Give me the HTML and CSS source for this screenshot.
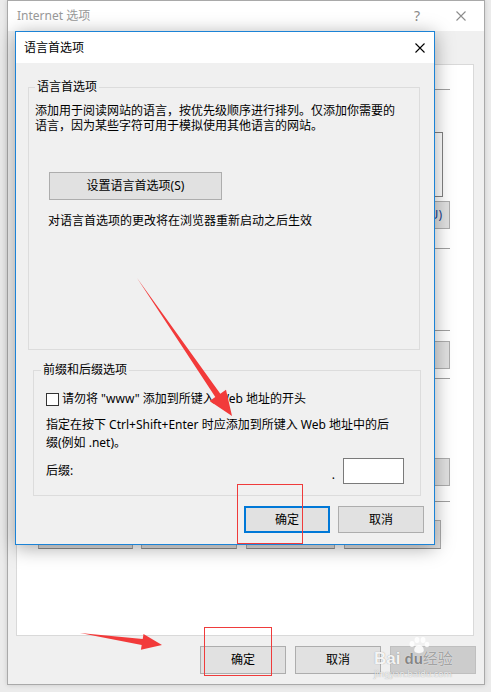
FILE: index.html
```html
<!DOCTYPE html>
<html>
    <head>
        <meta charset="utf-8">
        <title>语言首选项</title>
        <link rel="stylesheet" href="styles.css">
    </head>
    <body>
        <div class="screen">
            <div class="window">
                <div class="window-title">
                    <span class="caption">Internet 选项</span>
                    <span class="help">?</span>
                    <svg class="close gray" width="10" height="10" viewBox="0 0 10 10"><path d="M0.5 0.5 L9.5 9.5 M9.5 0.5 L0.5 9.5" /></svg>
                </div>
                <div class="window-body">
                    <div class="panel">
                        <div class="rule r1"></div>
                        <div class="listbox"></div>
                        <div class="btn panel-btn b1">删除(U)</div>
                        <div class="rule r2"></div>
                        <div class="rule r3"></div>
                        <div class="btn panel-btn b2"></div>
                        <div class="rule r4"></div>
                        <div class="btn panel-btn b3"></div>
                        <div class="rule r5"></div>
                        <div class="panel-row">
                            <div class="btn w98"></div>
                            <div class="btn w98"></div>
                            <div class="btn w91"></div>
                            <div class="btn w100"></div>
                        </div>
                    </div>
                    <div class="window-buttons">
                        <div class="btn wide">确定</div>
                        <div class="btn wide">取消</div>
                        <div class="btn wide disabled"></div>
                    </div>
                </div>
            </div>

            <div class="dialog">
                <div class="dialog-title">
                    <span class="caption">语言首选项</span>
                    <svg class="close" width="10" height="10" viewBox="0 0 10 10"><path d="M0.5 0.5 L9.5 9.5 M9.5 0.5 L0.5 9.5" /></svg>
                </div>
                <div class="dialog-body">
                    <div class="group g1">
                        <span class="group-title">语言首选项</span>
                        <div class="intro">
                            <span class="line">添加用于阅读网站的语言，按优先级顺序进行排列。仅添加你需要的</span>
                            <span class="line">语言，因为某些字符可用于模拟使用其他语言的网站。</span>
                        </div>
                        <div class="btn set-lang">设置语言首选项(S)</div>
                        <p class="note">对语言首选项的更改将在浏览器重新启动之后生效</p>
                    </div>
                    <div class="group g2">
                        <span class="group-title">前缀和后缀选项</span>
                        <div class="check-row">
                            <span class="checkbox"></span>
                            <span>请勿将 "www" 添加到所键入 Web 地址的开头</span>
                        </div>
                        <p class="hint">指定在按下 Ctrl+Shift+Enter 时应添加到所键入 Web 地址中的后<br>缀(例如 .net)。</p>
                        <div class="suffix-row">
                            <span>后缀:</span>
                            <span class="dot">.</span>
                            <span class="textbox"></span>
                        </div>
                    </div>
                    <div class="dialog-buttons">
                        <div class="btn wide default">确定</div>
                        <div class="btn wide">取消</div>
                    </div>
                </div>
            </div>

            <svg class="marks" width="491" height="692" viewBox="0 0 491 692">
                <polygon points="137,278 220.3,393.7 226,389.7 232,416 209.6,401.1 215.3,397.1" />
                <polygon points="80,633 142.7,638.9 143.5,634 162,645 140.9,649.8 141.7,644.9" />
                <rect x="237.5" y="484.5" width="65" height="59" />
                <rect x="204.5" y="627.5" width="67" height="48" />
            </svg>

            <div class="watermark">
                <svg class="paw" width="22" height="17" viewBox="0 0 22 17">
                    <ellipse cx="4" cy="7" rx="2.5" ry="3" />
                    <ellipse cx="9" cy="3" rx="2.5" ry="3" />
                    <ellipse cx="15" cy="3" rx="2.5" ry="3" />
                    <ellipse cx="19" cy="7.5" rx="2.3" ry="2.8" />
                    <path d="M11 8 C7 8 5 13 7 15 C9 16.5 13 16.5 15 15 C17 13 15 8 11 8 Z" />
                </svg>
                <div class="wm-logo"><span class="bai">Bai</span><span class="du">du</span><span class="jy">经验</span></div>
                <div class="wm-url">jingyan.baidu.com</div>
            </div>
        </div>
    </body>
</html>
```

FILE: styles.css
```css
body {
    margin: 0;
    background: #ebebeb;
    font-family: "Noto Sans", "Noto Sans CJK SC", sans-serif;
    font-size: 12px;
    line-height: 14px;
    color: #000;
}
p {
    margin: 0;
}
.screen {
    position: relative;
    width: 491px;
    height: 692px;
    overflow: hidden;
}

/* outer window */
.window {
    margin-left: 7px;
    width: 478px;
    height: 685px;
    box-sizing: border-box;
    border: 1px solid #a9a9a9;
    background: #f0f0f0;
    box-shadow: 0 0 5px rgba(0, 0, 0, 0.15);
}
.window-title {
    height: 30px;
    background: #fff;
    display: flex;
    align-items: center;
    color: #999;
}
.window-title .caption {
    padding-left: 9px;
}
.help {
    margin-left: auto;
    font-size: 14px;
    color: #8a8a8a;
}
.close {
    stroke: #000;
    stroke-width: 1.1;
    fill: none;
}
.close.gray {
    stroke: #8c8c8c;
    margin-left: 36px;
    margin-right: 18px;
}
.window-body {
    padding: 33px 8px 0 8px;
}
.panel {
    width: 458px;
    height: 572px;
    box-sizing: border-box;
    border: 1px solid #d9d9d9;
    background: #fff;
    display: flex;
    flex-direction: column;
    padding-right: 23px;
}
.rule {
    height: 1px;
    background: #a0a0a0;
    margin-left: 20px;
}
.r1 { margin-top: 24px; }
.r2 { margin-top: 19px; }
.r3 { margin-top: 81px; }
.r4 { margin-top: 9px; }
.r5 { margin-top: 15px; }
.listbox {
    margin-top: 42px;
    align-self: flex-end;
    margin-right: 7px;
    width: 200px;
    height: 65px;
    box-sizing: border-box;
    border: 1px solid #828282;
}
.btn {
    box-sizing: border-box;
    height: 28px;
    background: #e1e1e1;
    border: 1px solid #adadad;
    display: flex;
    align-items: center;
    justify-content: center;
}
.panel-btn {
    align-self: flex-end;
    width: 120px;
    justify-content: flex-end;
    padding-right: 7px;
    color: #1a3d8f;
}
.b1 { margin-top: 4px; }
.b2 { margin-top: 10px; }
.b3 { margin-top: 79px; }
.panel-row {
    margin-top: 18px;
    padding-left: 21px;
    display: flex;
}
.panel-row .btn {
    height: 29px;
    border-bottom-color: #8f8f8f;
    margin-right: 9px;
}
.w98 { width: 98px; }
.w91 { width: 91px; }
.w100 { width: 100px; }
.panel-row .w98:first-child { margin-right: 8px; }
.window-buttons {
    margin-top: 10px;
    display: flex;
    justify-content: flex-end;
    gap: 9px;
}
.wide {
    width: 86px;
}
.disabled {
    background: #cccccc;
    border-color: #bfbfbf;
}

/* dialog on top */
.dialog {
    position: absolute;
    left: 15px;
    top: 31px;
    width: 420px;
    height: 514px;
    box-sizing: border-box;
    border: 1px solid #1c83d6;
    background: #f0f0f0;
    box-shadow: 0 3px 18px rgba(0, 0, 0, 0.35);
}
.dialog-title {
    height: 31px;
    background: #fff;
    display: flex;
    align-items: center;
    padding-left: 8px;
}
.dialog-title .close {
    margin-left: auto;
    margin-right: 9px;
}
.dialog-body {
    padding: 24px 14px 0 12px;
}
.group {
    box-sizing: border-box;
    border: 1px solid #dcdcdc;
}
.group-title {
    display: block;
    width: max-content;
    height: 14px;
    margin: -8px 0 0 6px;
    padding: 0 2px;
    background: #f0f0f0;
}
.g1 {
    height: 263px;
    padding-left: 6px;
}
.g1 .group-title {
    margin-left: 0;
}
.intro {
    margin-top: 10px;
    font-family: "DejaVu Sans", "Noto Sans CJK SC", sans-serif;
}
.line {
    display: block;
    height: 14.5px;
    line-height: 14.5px;
}
.set-lang {
    margin: 39px 0 0 14px;
    width: 173px;
}
.note {
    margin: 14px 0 0 13px;
}
.g2 {
    margin: 20px 0 0 5px;
    width: 388px;
    height: 126px;
    padding: 0 16px 0 12px;
}
.g2 .group-title {
    margin-left: -5px;
}
.check-row {
    margin-top: 15px;
    display: flex;
    align-items: center;
}
.checkbox {
    width: 13px;
    height: 13px;
    box-sizing: border-box;
    border: 1px solid #333;
    background: #fff;
    margin-right: 3px;
}
.hint {
    margin-top: 10px;
    line-height: 18px;
}
.suffix-row {
    margin-top: 6px;
    display: flex;
    align-items: center;
}
.dot {
    margin-left: auto;
    margin-right: 8px;
    padding-top: 8px;
}
.textbox {
    width: 61px;
    height: 26px;
    box-sizing: border-box;
    border: 1px solid #7a7a7a;
    background: #fff;
}
.dialog-buttons {
    margin-top: 10px;
    margin-right: -4px;
    display: flex;
    justify-content: flex-end;
    gap: 8px;
}
.dialog-buttons .btn {
    height: 27px;
}
.default {
    border: 2px solid #0078d7;
}

/* annotations */
.marks {
    position: absolute;
    left: 0;
    top: 0;
    pointer-events: none;
}
.marks polygon {
    fill: #f23a3a;
}
.marks rect {
    fill: none;
    stroke: #ef3b3b;
    stroke-width: 1;
}
.watermark {
    position: absolute;
    left: 374px;
    top: 637px;
    width: 92px;
    color: rgba(255, 255, 255, 0.92);
    text-shadow: 0 0 1px rgba(90, 90, 90, 0.6);
}
.paw {
    display: block;
    margin-left: 34px;
    fill: rgba(255, 255, 255, 0.85);
}
.wm-logo {
    margin-top: -3px;
    font-family: "Liberation Sans", "Noto Sans CJK SC", sans-serif;
    font-size: 17px;
    line-height: 16px;
    font-weight: bold;
    white-space: nowrap;
}
.wm-logo .du {
    font-size: 15px;
    color: rgba(80, 80, 80, 0.7);
    text-shadow: 0 0 1px #fff;
    margin-left: 4px;
}
.wm-logo .jy {
    font-size: 15px;
    font-weight: normal;
    color: rgba(90, 90, 90, 0.55);
    text-shadow: 0 0 1px #fff;
}
.wm-url {
    margin-top: 2px;
    font-size: 9px;
    line-height: 10px;
    color: rgba(255, 255, 255, 0.8);
    white-space: nowrap;
}
```
